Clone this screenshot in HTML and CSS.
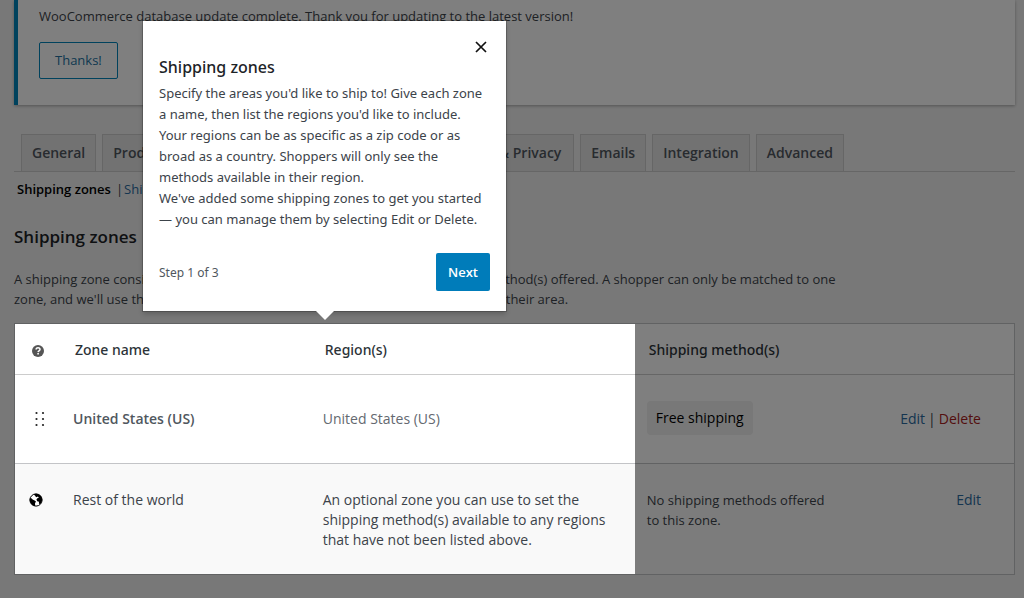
FILE: index.html
```html
<!DOCTYPE html>
<html lang="en">
<head>
<meta charset="utf-8">
<meta name="viewport" content="width=device-width, initial-scale=1">
<title>Shipping zones</title>
<link rel="stylesheet" href="styles.css">
</head>
<body>
<main class="page">
  <section class="notice">
    <p class="notice-text">WooCommerce database update complete. Thank you for updating to the latest version!</p>
    <button class="notice-button" type="button">Thanks!</button>
  </section>

  <nav class="tabs" aria-label="Settings">
    <a class="tab" href="#">General</a>
    <a class="tab tab-products" href="#">Products</a>
    <a class="tab tab-wide" href="#">Shipping</a>
    <a class="tab tab-wide" href="#">Payments</a>
    <a class="tab tab-accounts" href="#">Accounts &amp; Privacy</a>
    <a class="tab" href="#">Emails</a>
    <a class="tab" href="#">Integration</a>
    <a class="tab" href="#">Advanced</a>
  </nav>

  <nav class="subnav" aria-label="Shipping">
    <a class="subnav-current" href="#">Shipping zones</a>
    <span>|</span>
    <a class="link" href="#">Shipping options</a>
  </nav>

  <h2 class="heading">Shipping zones</h2>
  <p class="intro">A shipping zone consists of the region(s) you'd like to ship to and the shipping method(s) offered. A shopper can only be matched to one<br>zone, and we'll use their shipping address to show all of the methods available in their area.</p>

  <div class="zones">
    <table class="zones-table">
      <colgroup><col class="col-sort"><col class="col-name"><col class="col-region"><col class="col-method"><col></colgroup>
      <thead>
        <tr>
          <th scope="col" class="cell-help">
            <svg class="icon-help" viewBox="0 0 12 12" role="img" aria-label="Help"><circle cx="6" cy="6" r="6" fill="#555"/><path d="M4.1 4.6C4.1 2.2 8 2.2 8 4.5C8 5.9 6.2 5.8 6.1 7.1" fill="none" stroke="#fff" stroke-width="1.5"/><rect x="5.3" y="8" width="1.6" height="1.5" fill="#fff"/></svg>
          </th>
          <th scope="col">Zone name</th>
          <th scope="col">Region(s)</th>
          <th scope="col" colspan="2">Shipping method(s)</th>
        </tr>
      </thead>
      <tbody>
        <tr class="row-zone">
          <td class="cell-drag"><svg class="icon-drag" viewBox="0 0 10 16" aria-hidden="true"><g fill="#222"><circle cx="1.5" cy="2" r="1.1"/><circle cx="8" cy="2" r="1.1"/><circle cx="1.5" cy="8" r="1.1"/><circle cx="8" cy="8" r="1.1"/><circle cx="1.5" cy="14" r="1.1"/><circle cx="8" cy="14" r="1.1"/></g></svg></td>
          <td class="zone-name">United States (US)</td>
          <td class="zone-region">United States (US)</td>
          <td class="cell-method"><span class="method">Free shipping</span></td>
          <td class="cell-actions"><a class="link" href="#">Edit</a><span class="divider">|</span><a class="link-delete" href="#">Delete</a></td>
        </tr>
        <tr class="row-world">
          <td class="cell-globe"><svg class="icon-globe" viewBox="0 0 14 14" aria-hidden="true"><circle cx="7" cy="7" r="6.1" fill="#fff" stroke="#000" stroke-width="1"/><path d="M.8 5.4C2 5 3 5.6 3.6 6.6L5.6 7.4 7 8.6 6 10.2 6.2 13.1C3.4 12.9.9 10.4.8 7Z"/><path d="M4.3 1.5 7 .8 9.6 1.3C12 2.4 13.2 4.6 13.2 7L12.4 9.4 11 11.2 9.9 10.6 10 8.8 8.2 8.2 7.4 6.6 8.4 5.2 9.9 4.6 8.8 3.6 7.6 4.3 6.5 3.4 6 2.4Z"/></svg></td>
          <td>Rest of the world</td>
          <td>An optional zone you can use to set the<br>shipping method(s) available to any regions<br>that have not been listed above.</td>
          <td class="no-methods">No shipping methods offered<br>to this zone.</td>
          <td class="cell-actions"><a class="link" href="#">Edit</a></td>
        </tr>
      </tbody>
    </table>

    <div class="spotlight"></div>

    <section class="popover" role="dialog" aria-labelledby="tour-title">
      <button class="popover-close" type="button" aria-label="Close"><svg class="icon-close" viewBox="0 0 12 12" aria-hidden="true"><path d="M1 1 11 11M11 1 1 11" stroke="#111" stroke-width="1.7"/></svg></button>
      <h3 class="popover-title" id="tour-title">Shipping zones</h3>
      <p class="popover-text">Specify the areas you'd like to ship to! Give each zone<br>a name, then list the regions you'd like to include.<br>Your regions can be as specific as a zip code or as<br>broad as a country. Shoppers will only see the<br>methods available in their region.<br>We've added some shipping zones to get you started<br>— you can manage them by selecting Edit or Delete.</p>
      <div class="popover-footer">
        <span>Step 1 of 3</span>
        <button class="popover-next" type="button">Next</button>
      </div>
    </section>
  </div>
</main>
</body>
</html>
```

FILE: styles.css
```css
* { box-sizing: border-box; }
body {
  margin: 0;
  background: #f1f1f1;
  color: #3c434a;
  font-family: "Open Sans", "Noto Sans", sans-serif;
  font-size: 13px;
  line-height: 20px;
}
p, h2, h3 { margin: 0; }
a { text-decoration: none; }
button { font: inherit; cursor: pointer; }

.page {
  min-height: 100vh;
  padding: 0 9px 0 14px;
  overflow: hidden;
}

.notice {
  padding: 6px 21px 26px;
  border-left: 4px solid #0085ba;
  background: #fff;
  box-shadow: 0 1px 3px rgba(0, 0, 0, .3);
}
.notice-button {
  margin-top: 16px;
  padding: 7px 15px 8px;
  border: 1px solid #0085ba;
  border-radius: 2px;
  background: transparent;
  color: #2271a1;
}

.tabs {
  display: flex;
  gap: 6px;
  margin-top: 29px;
  padding-left: 7px;
  border-bottom: 1px solid #ccc;
  white-space: nowrap;
}
.tab {
  padding: 6px 10px;
  border: 1px solid #ccc;
  border-bottom: 0;
  background: #e5e5e5;
  color: #50575e;
  font-size: 14px;
  font-weight: 600;
  line-height: 24px;
}
.tab-products { width: 80px; }
.tab-wide { width: 111px; }
.tab-accounts { width: 152px; }

.subnav { display: flex; gap: 1px; margin: 7px 0 0 3px; }
.subnav-current { margin-right: 4px; color: #000; font-weight: 600; }
.link { color: #2a6aa0; }
.link-delete { color: #a82020; }
.divider { margin: 0 3px; }

.heading {
  margin-top: 25px;
  color: #1d2327;
  font-size: 17px;
  font-weight: 600;
  line-height: 26px;
}
.intro { margin-top: 19px; }

.zones { position: relative; margin-top: 14px; }
.zones-table {
  width: 100%;
  border: 1px solid #c3c4c7;
  border-spacing: 0;
  background: #fff;
  font-size: 14px;
  table-layout: fixed;
}
.col-sort { width: 50px; }
.col-name { width: 25%; }
.col-region { width: 324px; }
.col-method { width: 21%; }
.zones-table th {
  padding: 16px 10px 14px;
  border-bottom: 1px solid #ccc;
  color: #2c3338;
  font-family: "Noto Sans", sans-serif;
  font-weight: 500;
  text-align: left;
}
.zones-table td { padding: 26px 8px 24px; text-align: left; vertical-align: top; }
.zones-table .row-zone td { padding: 34px 8px; border-bottom: 1px solid #c3c4c7; }
.zones-table .row-zone .cell-method { padding: 26px 8px 28px; }
.zones-table .row-zone .zone-name { color: #50575e; font-weight: 600; }
.zone-region { color: #646970; }
.row-world { background: #f9f9f9; }
.zones-table .cell-help { padding-left: 17px; }
.zones-table .row-zone .cell-drag { padding-left: 20px; }
.zones-table .cell-globe { padding-left: 14px; }
.zones-table .cell-actions,
.zones-table .row-zone .cell-actions { padding-right: 33px; text-align: right; white-space: nowrap; }
.zones-table .no-methods { font-size: 13px; white-space: nowrap; }
.icon-help { display: block; width: 12px; height: 12px; margin-top: 2px; }
.icon-drag { display: block; width: 10px; height: 16px; margin-top: 2px; }
.icon-globe { display: block; width: 14px; height: 14px; margin-top: 3px; }
.method {
  display: inline-block;
  padding: 7px 9px;
  border-radius: 4px;
  background: #f0f0f0;
  color: #000;
  white-space: nowrap;
}

.spotlight {
  position: absolute;
  top: 1px;
  bottom: 1px;
  left: 1px;
  width: calc(62% - 1px);
  box-shadow: 0 0 0 9999px rgba(0, 0, 0, .5);
  pointer-events: none;
}

.popover {
  position: absolute;
  bottom: calc(100% + 12px);
  left: 129px;
  width: 363px;
  padding: 16px;
  background: #fff;
  box-shadow: 0 0 0 1px rgba(0, 0, 0, .2), 0 3px 5px rgba(0, 0, 0, .2);
  font-family: "Noto Sans", sans-serif;
  font-size: 13px;
  line-height: 21px;
}
.popover::after {
  position: absolute;
  top: 100%;
  left: 173px;
  border: solid transparent;
  border-width: 9px 9px 0;
  border-top-color: #fff;
  content: "";
}
.popover-close {
  display: flex;
  align-items: center;
  justify-content: center;
  width: 18px;
  height: 20px;
  margin-left: auto;
  padding: 0;
  border: 0;
  background: none;
}
.icon-close { width: 12px; height: 12px; }
.popover-title { color: #1d2327; font-size: 16px; font-weight: 500; line-height: 20px; }
.popover-text { margin-top: 6px; white-space: nowrap; }
.popover-footer {
  display: flex;
  align-items: center;
  justify-content: space-between;
  margin-top: 23px;
  padding-bottom: 4px;
  color: #50575e;
  font-size: 12px;
}
.popover-next {
  padding: 9px 12px;
  border: 0;
  border-radius: 2px;
  background: #007cba;
  color: #fff;
  font-family: "Open Sans", sans-serif;
  font-size: 13px;
  font-weight: 600;
  line-height: 20px;
}
```
